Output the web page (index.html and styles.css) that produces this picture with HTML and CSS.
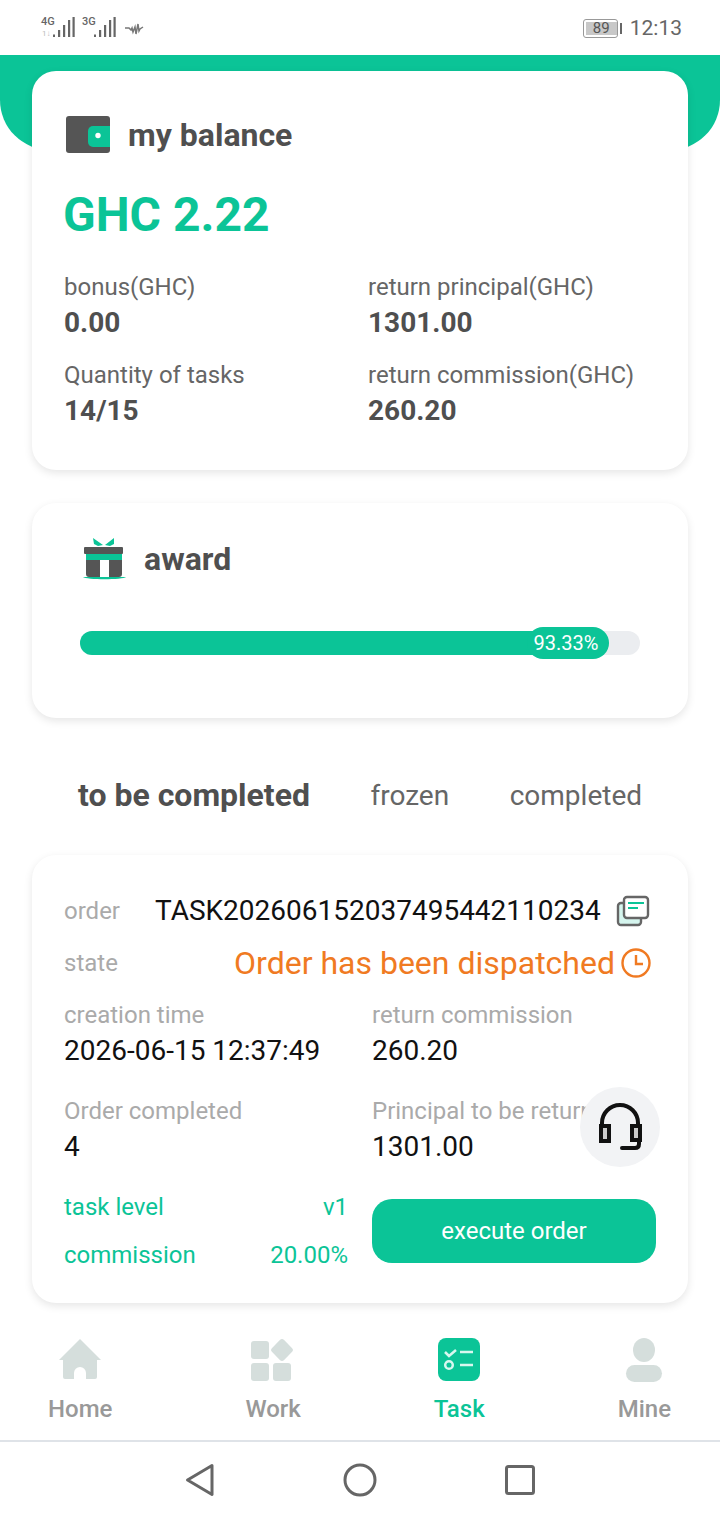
FILE: index.html
```html
<!DOCTYPE html>
<html lang="en">
<head>
    <meta charset="UTF-8">
    <title>Task</title>
    <link rel="stylesheet" href="styles.css">
</head>
<body>

<div class="phone">
    <div class="status-bar">
        <div class="status-left">
            <div class="net">
                <span class="net-type">4G</span>
                <span class="net-sub">1↓</span>
                <svg class="bars" width="22" height="20" viewBox="0 0 22 20"><path d="M0 17.500h2V20H0zM5 13h2.200v7H5zM10 8h2.200v12H10zM15 3h2.200v17H15zM19.500 0h2.200v20h-2.200z" fill="#666"/></svg>
            </div>
            <div class="net">
                <span class="net-type">3G</span>
                <svg class="bars" width="22" height="20" viewBox="0 0 22 20"><path d="M0 17.500h2V20H0zM5 13h2.200v7H5zM10 8h2.200v12H10zM15 3h2.200v17H15zM19.500 0h2.200v20h-2.200z" fill="#666"/></svg>
            </div>
            <svg class="pulse" width="20" height="14" viewBox="0 0 20 14"><path d="M1 6h4l2 2 1-2 1 4 2-5 1 7 2-10 1 7 1-2 3-2" fill="none" stroke="#777" stroke-width="1.500"/></svg>
        </div>
        <div class="status-right">
            <div class="battery"><span class="battery-level">89</span></div>
            <span class="battery-tip"></span>
            <span class="clock">12:13</span>
        </div>
    </div>

    <div class="hero"></div>

    <div class="content">
        <section class="card balance-card">
            <div class="card-title">
                <svg width="44" height="38" viewBox="0 0 44 38">
                    <rect x="0" y="0" width="44" height="37" rx="3" fill="#555"/>
                    <path d="M44 10H27a5 5 0 0 0-5 5v11a5 5 0 0 0 5 5h17z" fill="#0bc497"/>
                    <circle cx="32" cy="19.500" r="2.700" fill="#fff"/>
                </svg>
                <span>my balance</span>
            </div>
            <div class="amount">GHC 2.22</div>
            <div class="stats">
                <div class="stat"><span class="stat-label">bonus(GHC)</span><strong class="stat-value">0.00</strong></div>
                <div class="stat"><span class="stat-label">return principal(GHC)</span><strong class="stat-value">1301.00</strong></div>
                <div class="stat"><span class="stat-label">Quantity of tasks</span><strong class="stat-value">14/15</strong></div>
                <div class="stat"><span class="stat-label">return commission(GHC)</span><strong class="stat-value">260.20</strong></div>
            </div>
        </section>

        <section class="card award-card">
            <div class="card-title award-title">
                <svg width="44" height="44" viewBox="0 0 44 44">
                    <path d="M21 8 11 1l1 6 4 2zM23 8l9-7 0 6-4 2z" fill="#0bc497"/>
                    <rect x="2" y="10" width="39" height="7" rx="1" fill="#555"/>
                    <rect x="4" y="17" width="36" height="6" fill="#0bc497"/>
                    <path d="M4 23h14v17H7a3 3 0 0 1-3-3zM27 23h13v14a3 3 0 0 1-3 3H27z" fill="#555"/>
                    <path d="M1 40h43c-3 3-40 3-43 0z" fill="#0bc497"/>
                </svg>
                <span>award</span>
            </div>
            <div class="progress">
                <div class="progress-fill" style="width: 93.33%"></div>
                <span class="progress-tag">93.33%</span>
            </div>
        </section>

        <div class="tabs">
            <span class="tab active">to be completed</span>
            <span class="tab">frozen</span>
            <span class="tab">completed</span>
        </div>

        <section class="card order-card">
            <div class="order-row">
                <span class="muted">order</span>
                <span class="order-no">TASK202606152037495442110234</span>
                <svg class="copy" width="34" height="32" viewBox="0 0 34 32">
                    <rect x="2" y="8" width="23" height="22" rx="3" fill="#d5f5ee" stroke="#666" stroke-width="2.400"/>
                    <rect x="8" y="2" width="24" height="21" rx="3" fill="#fff" stroke="#666" stroke-width="2.400"/>
                    <path d="M12 8h16M12 13h10" stroke="#0bc497" stroke-width="2"/>
                </svg>
            </div>
            <div class="state-row">
                <span class="muted">state</span>
                <span class="state-text">Order has been dispatched</span>
                <svg width="32" height="32" viewBox="0 0 32 32" fill="none" stroke="#f07a22" stroke-width="2.400">
                    <circle cx="16" cy="16" r="13.500"/>
                    <path d="M16 8v9h7"/>
                </svg>
            </div>
            <div class="details">
                <div class="detail"><span class="muted">creation time</span><span class="detail-value">2026-06-15 12:37:49</span></div>
                <div class="detail"><span class="muted">return commission</span><span class="detail-value">260.20</span></div>
                <div class="detail"><span class="muted">Order completed</span><span class="detail-value">4</span></div>
                <div class="detail"><span class="muted">Principal to be returned</span><span class="detail-value">1301.00</span></div>
            </div>
            <div class="order-foot">
                <div class="levels">
                    <div class="level"><span>task level</span><span>v1</span></div>
                    <div class="level"><span>commission</span><span>20.00%</span></div>
                </div>
                <button class="execute">execute order</button>
            </div>
            <div class="support">
                <svg width="80" height="80" viewBox="0 0 80 80" fill="none" stroke="#111" stroke-width="4">
                    <path d="M22 40V36a18 18 0 0 1 36 0v4"/>
                    <rect x="21" y="39" width="8" height="15" fill="#ccc"/>
                    <rect x="52" y="39" width="8" height="14" fill="#ccc"/>
                    <path d="M59 53v4q0 4-4 4H42" stroke-linecap="round"/>
                </svg>
            </div>
        </section>
    </div>

    <nav class="tab-bar">
        <div class="nav-item">
            <svg width="44" height="44" viewBox="0 0 44 44"><path d="M22 1 43 22h-4v17a2 2 0 0 1-2 2h-9v-6a6 6 0 0 0-12 0v6H7a2 2 0 0 1-2-2V22H1z" fill="#d5dedc"/></svg>
            <span>Home</span>
        </div>
        <div class="nav-item">
            <svg width="44" height="44" viewBox="0 0 44 44" fill="#d5dedc">
                <rect x="0" y="3" width="18" height="18" rx="3"/>
                <rect x="0" y="25" width="18" height="18" rx="3"/>
                <rect x="22" y="25" width="18" height="18" rx="3"/>
                <rect x="22.500" y="3.500" width="17" height="17" rx="3" transform="rotate(45 31 12)"/>
            </svg>
            <span>Work</span>
        </div>
        <div class="nav-item active">
            <svg width="44" height="44" viewBox="0 0 44 44">
                <rect x="1" y="0" width="42" height="43" rx="8" fill="#0bc497"/>
                <path d="M8 14l4 4 7-6M23 14h13M23 27h13" fill="none" stroke="#d8f7ef" stroke-width="2.500"/>
                <circle cx="12" cy="27" r="3.800" fill="none" stroke="#d8f7ef" stroke-width="2.500"/>
            </svg>
            <span>Task</span>
        </div>
        <div class="nav-item">
            <svg width="44" height="44" viewBox="0 0 44 44" fill="#d5dedc">
                <ellipse cx="22" cy="12" rx="11" ry="12"/>
                <rect x="4" y="27" width="36" height="17" rx="8.500"/>
            </svg>
            <span>Mine</span>
        </div>
    </nav>

    <div class="nav-bar">
        <svg width="30" height="34" viewBox="0 0 30 34"><path d="M27 2.500 2.500 17 27 31.500z" fill="none" stroke="#666" stroke-width="3" stroke-linejoin="round"/></svg>
        <svg width="34" height="34" viewBox="0 0 34 34"><circle cx="17" cy="17" r="15" fill="none" stroke="#666" stroke-width="3"/></svg>
        <svg width="30" height="30" viewBox="0 0 30 30"><rect x="1.500" y="1.500" width="27" height="27" rx="2" fill="none" stroke="#666" stroke-width="3"/></svg>
    </div>
</div>

</body>
</html>
```
FILE: styles.css
```css
* {
    box-sizing: border-box;
}
body {
    margin: 0;
    font-family: Roboto, "Liberation Sans", sans-serif;
    background-color: #fff;
}
.phone {
    width: 720px;
    height: 1520px;
    overflow: hidden;
    display: flex;
    flex-direction: column;
}

/* status bar */
.status-bar {
    height: 55px;
    padding: 14px 38px 0 41px;
    display: flex;
    justify-content: space-between;
    align-items: flex-start;
    color: #666;
}
.status-left {
    display: flex;
    align-items: flex-start;
    gap: 7px;
}
.net {
    position: relative;
    width: 34px;
    height: 24px;
}
.net-type {
    font-size: 11px;
    line-height: 12px;
    font-weight: 500;
    position: absolute;
    left: 0;
    top: 2px;
}
.net-sub {
    font-size: 8px;
    line-height: 8px;
    color: #bbb;
    position: absolute;
    left: 1px;
    top: 16px;
}
.bars {
    position: absolute;
    right: 0;
    top: 3px;
}
.pulse {
    margin: 8px 0 0 1px;
}
.status-right {
    display: flex;
    align-items: center;
}
.battery {
    width: 35px;
    height: 19px;
    border: 1px solid #999;
    border-radius: 3px;
    padding: 2px 0 2px 2px;
    margin-right: 2px;
}
.battery-level {
    display: block;
    height: 13px;
    background-color: #c8c8c8;
    font-size: 15px;
    line-height: 13px;
    text-align: center;
    color: #555;
}
.battery-tip {
    width: 2px;
    height: 11px;
    background-color: #666;
    margin-right: 8px;
}
.clock {
    font-size: 21px;
    line-height: 28px;
}

/* green header behind first card */
.hero {
    height: 95px;
    margin-bottom: -79px;
    background-color: #0bc497;
    border-radius: 0 0 50px 50px;
}
.content {
    position: relative;
    flex: 1;
    padding: 0 32px;
}
.card {
    background-color: #fff;
    border-radius: 24px;
    box-shadow: 0 3px 8px rgba(0,0,0,0.1);
}
.card-title {
    display: flex;
    align-items: center;
    gap: 18px;
    font-size: 32px;
    line-height: 38px;
    font-weight: 700;
    color: #4f4f4f;
}

/* balance */
.balance-card {
    height: 399px;
    padding: 45px 32px 0 34px;
}
.amount {
    margin: 26px 0 0 -3px;
    font-size: 48px;
    line-height: 70px;
    font-weight: 700;
    color: #0bc497;
}
.stats {
    margin: 21px 0 0 -2px;
    display: grid;
    grid-template-columns: 304px 1fr;
}
.stat {
    height: 88px;
    display: flex;
    flex-direction: column;
}
.stat-label {
    font-size: 24px;
    line-height: 32px;
    color: #666;
}
.stat-value {
    margin-top: 1px;
    font-size: 28px;
    line-height: 38px;
    color: #4f4f4f;
}

/* award */
.award-card {
    height: 215px;
    margin-top: 33px;
    padding: 34px 48px 0;
}
.award-title {
    margin-left: 2px;
}
.progress {
    position: relative;
    margin-top: 50px;
    height: 24px;
    border-radius: 12px;
    background-color: #ebedf0;
}
.progress-fill {
    height: 24px;
    border-radius: 12px;
    background-color: #0bc497;
}
.progress-tag {
    position: absolute;
    left: 447px;
    top: -4px;
    width: 82px;
    height: 32px;
    padding-right: 4px;
    border-radius: 16px;
    background-color: #0bc497;
    color: #fff;
    font-size: 20px;
    line-height: 32px;
    text-align: center;
}

/* tabs */
.tabs {
    height: 137px;
    padding: 17px 0 0 46px;
    display: flex;
    gap: 60.5px;
    align-items: center;
}
.tab {
    font-size: 28px;
    color: #666;
}
.tab.active {
    font-size: 32px;
    font-weight: 700;
    color: #4f4f4f;
}

/* order */
.order-card {
    position: relative;
    height: 448px;
    padding: 30px 32px 0;
}
.muted {
    font-size: 24px;
    line-height: 32px;
    color: #aaa;
}
.order-row {
    display: flex;
    align-items: center;
    height: 51px;
}
.order-no {
    margin-left: 35px;
    font-size: 28px;
    color: #111;
    white-space: nowrap;
}
.copy {
    margin-left: 15px;
}
.state-row {
    display: flex;
    align-items: center;
    height: 54px;
}
.state-text {
    margin-left: auto;
    margin-right: 5px;
    font-size: 32px;
    color: #f07a22;
}
.state-row svg {
    margin-right: 4px;
}
.details {
    margin-top: 9px;
    display: grid;
    grid-template-columns: 308px 1fr;
}
.detail {
    height: 96px;
    display: flex;
    flex-direction: column;
    white-space: nowrap;
}
.detail-value {
    margin-top: 2px;
    font-size: 28px;
    line-height: 36px;
    color: #111;
}
.order-foot {
    display: flex;
    align-items: flex-start;
    gap: 24px;
}
.levels {
    width: 284px;
    margin-top: -8px;
}
.level {
    height: 48px;
    display: flex;
    justify-content: space-between;
    align-items: center;
    font-size: 24px;
    color: #0bc497;
}
.execute {
    width: 284px;
    height: 64px;
    margin-top: 8px;
    border: none;
    border-radius: 20px;
    background-color: #0bc497;
    color: #fff;
    font-family: inherit;
    font-size: 24px;
}
.support {
    position: absolute;
    left: 548px;
    top: 232px;
    width: 80px;
    height: 80px;
    border-radius: 50%;
    background-color: #f2f3f5;
}

/* bottom tab bar */
.tab-bar {
    height: 139px;
    padding: 35px 49px 0 48px;
    border-bottom: 2px solid #dfe3e8;
    display: flex;
    justify-content: space-between;
}
.nav-item {
    display: flex;
    flex-direction: column;
    align-items: center;
    font-size: 24px;
    line-height: 34px;
    font-weight: 500;
    color: #999;
    gap: 10px;
}
.nav-item.active {
    color: #0bc497;
}
.nav-bar {
    height: 78px;
    padding: 0 185px 2px;
    display: flex;
    justify-content: space-between;
    align-items: center;
}
```
